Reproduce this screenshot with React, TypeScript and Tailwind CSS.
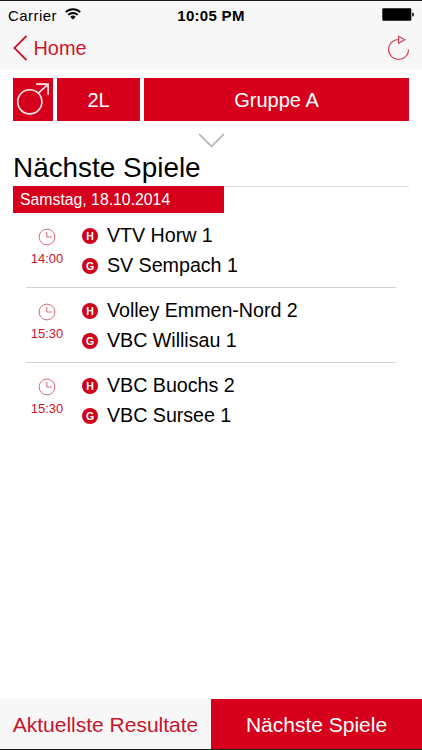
import React from 'react';

const matches = [
    { time: "14:00", home: "VTV Horw 1", guest: "SV Sempach 1" },
    { time: "15:30", home: "Volley Emmen-Nord 2", guest: "VBC Willisau 1" },
    { time: "15:30", home: "VBC Buochs 2", guest: "VBC Sursee 1" },
];

function StatusBar() {
    return (
        <div className="h-[28px] flex items-center justify-between pl-[8px] pr-[8px] text-black">
            <div className="w-[120px] flex items-center gap-[8px]">
                <span className="text-[15px] leading-none tracking-[0.45px]">Carrier</span>
                <svg className="-mt-[2px]" width="16" height="12" viewBox="0 0 16 12" fill="none" stroke="#000" strokeWidth="1.9">
                    <path d="M0.8 4.2a10.2 10.2 0 0 1 14.4 0" />
                    <path d="M3.3 6.9a6.7 6.7 0 0 1 9.4 0" />
                    <path d="M8 11.6L5.3 8.9a3.8 3.8 0 0 1 5.4 0z" fill="#000" stroke="none" />
                </svg>
            </div>
            <span className="text-[15px] leading-none font-bold tracking-[0.3px]">10:05 PM</span>
            <div className="w-[120px] flex justify-end">
                <svg className="-mt-[2px]" width="32" height="13" viewBox="0 0 32 13">
                    <rect x="0.3" y="0.3" width="29" height="12.4" rx="1.2" fill="#000" />
                    <path d="M30.3 4.3a2.3 2.3 0 0 1 0 4.4z" fill="#000" />
                </svg>
            </div>
        </div>
    );
}

function NavBar() {
    return (
        <div className="h-[40px] flex items-start justify-between pl-[13px] pr-[12px] text-[#d0142c]">
            <div className="flex items-center h-[38px]">
                <svg width="15" height="26" viewBox="0 0 15 26" fill="none" stroke="currentColor" strokeWidth="1.8">
                    <path d="M13.4 1L1.4 13l12 12" />
                </svg>
                <span className="ml-[5.5px] mt-[2px] text-[19.9px] leading-none">Home</span>
            </div>
            <svg className="mt-[6px]" width="22" height="26" viewBox="0 0 22 26" fill="none" stroke="#d84055" strokeWidth="1.2">
                <path d="M20.6 14.5a10 10 0 1 1-10-10" />
                <path d="M10.6 1.2v7l6.2-3.5z" />
            </svg>
        </div>
    );
}

function TeamLine({ badge, name }: { badge: string; name: string }) {
    return (
        <div className="h-[30px] flex items-center">
            <span className="w-4 h-4 rounded-full bg-[#d0021b] text-white text-[10.5px] leading-none font-bold flex items-center justify-center">
                {badge}
            </span>
            <span className="ml-[9px] text-[19.7px] leading-none tracking-[-0.04px] text-black whitespace-nowrap">{name}</span>
        </div>
    );
}

function MatchRow({ match }: { match: typeof matches[0] }) {
    return (
        <div className="h-[75px] flex border-b border-[#d3d3d3] last:border-transparent">
            <div className="w-[42px] pt-[15px] flex flex-col items-center">
                <svg width="18" height="18" viewBox="0 0 18 18" fill="none" stroke="#e0677a" strokeWidth="1">
                    <circle cx="9" cy="9" r="7.9" />
                    <path d="M8.8 4v5h4.8" />
                </svg>
                <span className="mt-[6px] text-[13px] leading-[13px] text-[#c8142c]">{match.time}</span>
            </div>
            <div className="pt-[8px] ml-[14px]">
                <TeamLine badge="H" name={match.home} />
                <TeamLine badge="G" name={match.guest} />
            </div>
        </div>
    );
}

export default function App() {
    return (
        <div className="w-[422px] h-[750px] flex flex-col overflow-hidden bg-white font-['Liberation_Sans',Arial,sans-serif]">
            <header className="h-[69px] shrink-0 bg-[#f7f7f7] border-t border-[#1a1a1a]">
                <StatusBar />
                <NavBar />
            </header>

            <main className="flex-1 px-[13px] pt-[9px]">
                {/* League filter */}
                <div className="h-[43px] flex gap-[4px] text-white text-[20px]">
                    <div className="w-[40px] bg-[#d6001c]">
                        <svg width="40" height="43" viewBox="0 0 40 43" fill="none" stroke="#ffe9ec" strokeWidth="1.6">
                            <circle cx="16.8" cy="23.8" r="12.1" />
                            <path d="M25.4 15.2l9.7-9M23.2 6.1h11.9v10.7" />
                        </svg>
                    </div>
                    <div className="w-[83px] bg-[#d6001c] flex items-center justify-center">2L</div>
                    <div className="flex-1 bg-[#d6001c] flex items-center justify-center">Gruppe A</div>
                </div>

                <svg className="block mx-auto mt-[12px]" width="27" height="15" viewBox="0 0 27 15" fill="none" stroke="#b2b2b2" strokeWidth="1.7">
                    <path d="M1 1l12.5 12.3L26 1" />
                </svg>

                <h1 className="h-[39px] pt-[4px] text-[27.9px] leading-[32px] text-black border-b border-[#dedede]">Nächste Spiele</h1>
                <div className="w-[211px] h-[27px] -mt-px relative bg-[#d6001c] pl-[7px] text-white text-[15.8px] leading-[27px]">
                    Samstag, 18.10.2014
                </div>

                <div className="px-[13px]">
                    {matches.map((match, i) => (
                        <MatchRow key={i} match={match} />
                    ))}
                </div>
            </main>

            <footer className="h-[51px] shrink-0 flex text-[21px] border-b border-[#1a1a1a]">
                <div className="w-[211px] pt-[2px] bg-[#f7f7f7] text-[#c8142c] flex items-center justify-center">Aktuellste Resultate</div>
                <div className="flex-1 pt-[2px] bg-[#d6001c] text-white flex items-center justify-center">Nächste Spiele</div>
            </footer>
        </div>
    );
}
